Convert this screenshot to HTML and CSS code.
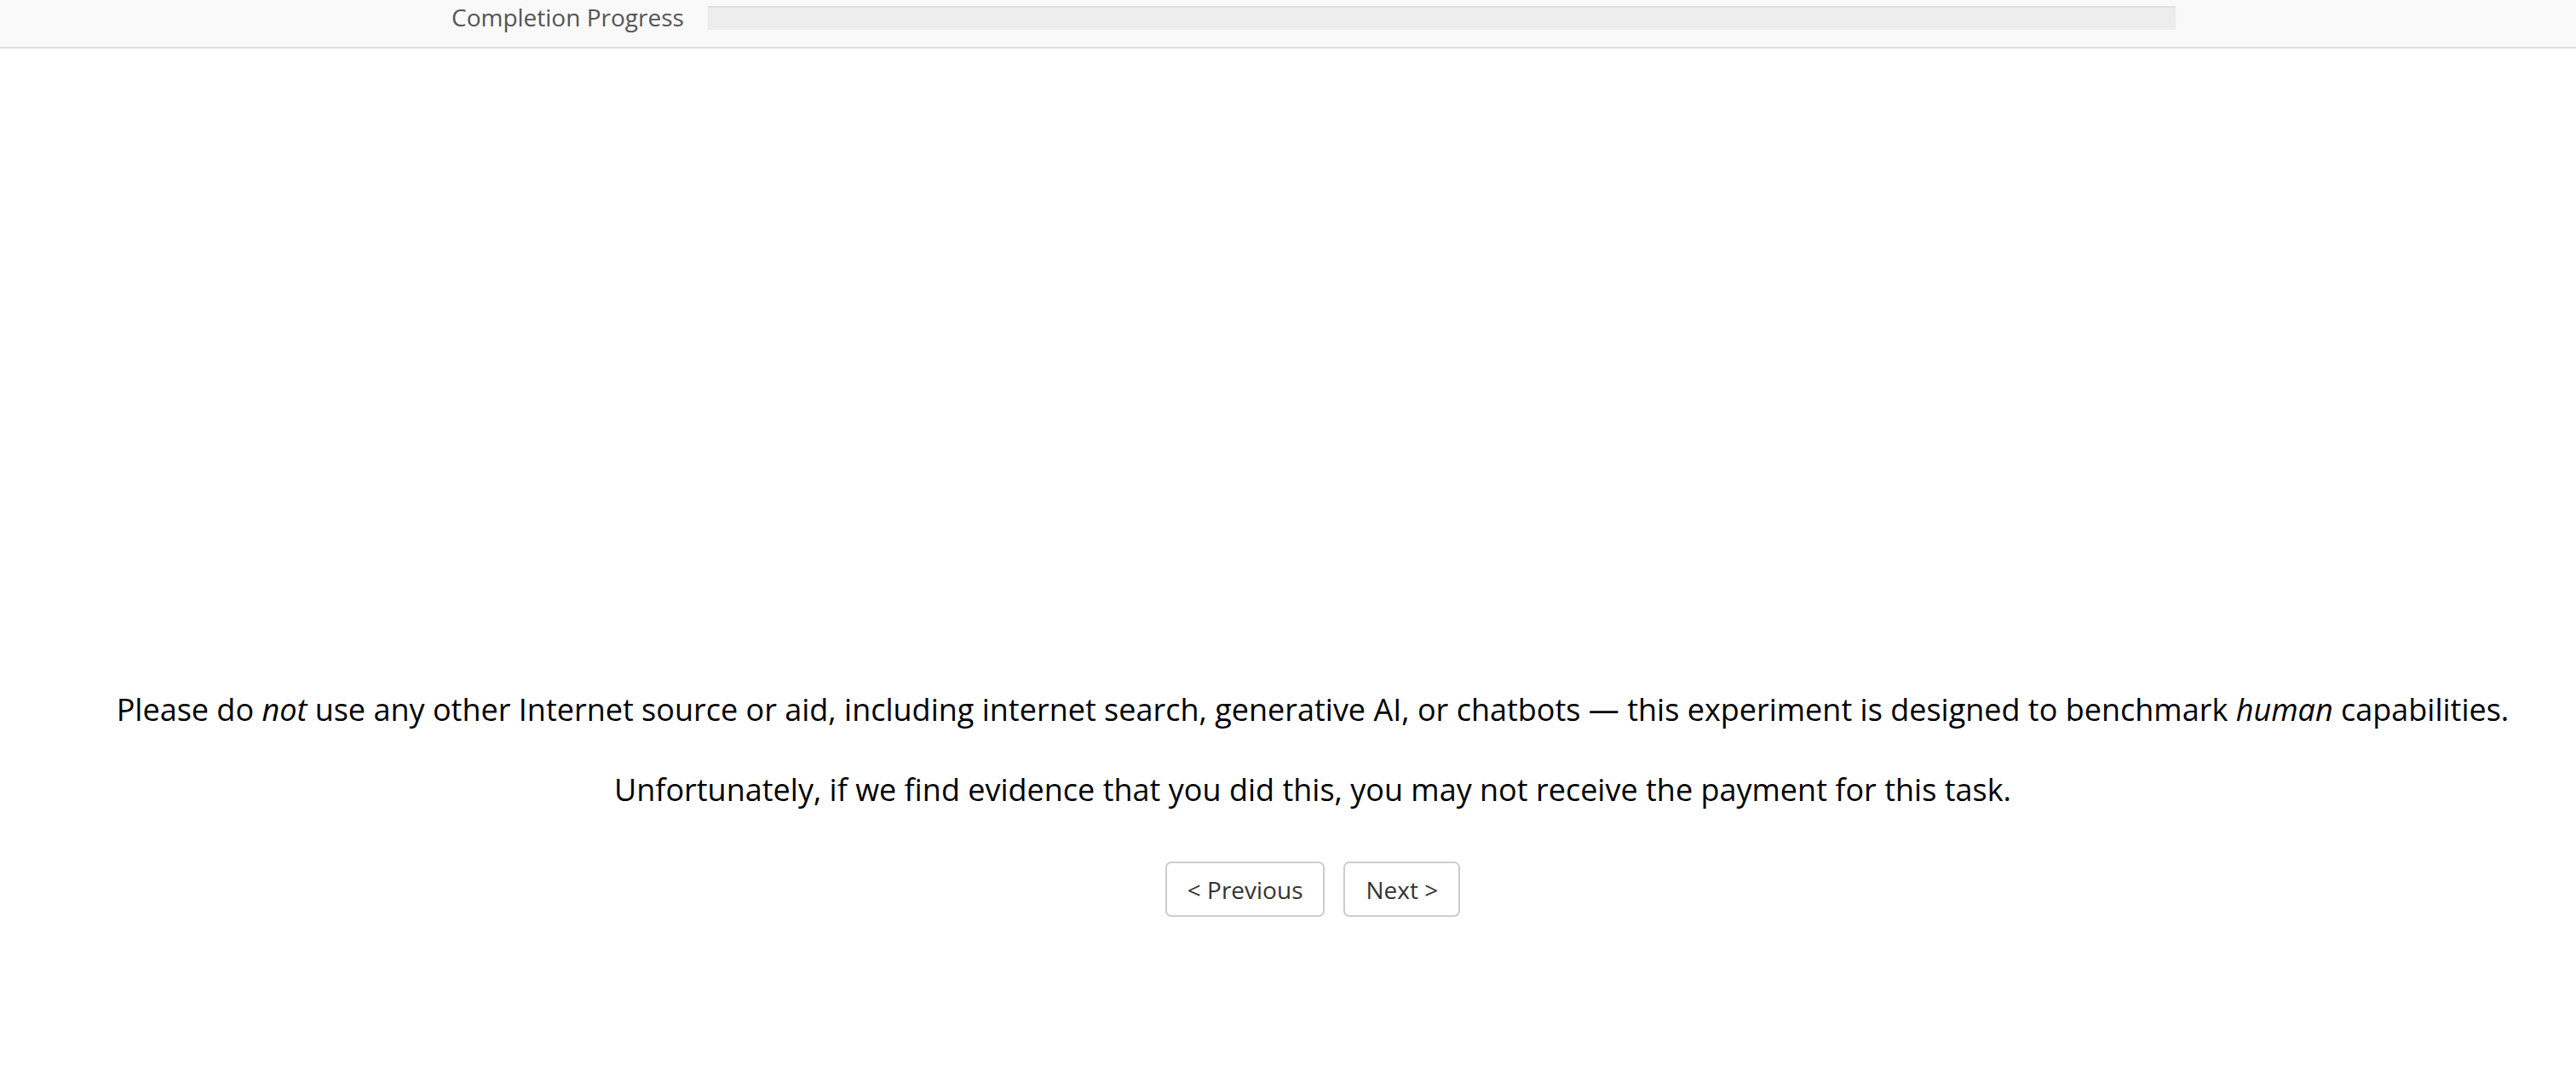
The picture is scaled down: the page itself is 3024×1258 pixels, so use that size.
FILE: index.html
```html
<!DOCTYPE html>
<html>
<head>
<meta charset="utf-8">
<link rel="stylesheet" href="styles.css">
</head>
<body>
<header class="topbar">
  <span class="progress-label">Completion Progress</span>
  <div class="progress-track"><div class="progress-fill" style="width:0%"></div></div>
</header>
<main class="content">
  <p class="notice">Please do <em>not</em> use any other Internet source or aid, including internet search, generative AI, or chatbots — this experiment is designed to benchmark <em>human</em> capabilities.</p>
  <p class="notice">Unfortunately, if we find evidence that you did this, you may not receive the payment for this task.</p>
  <div class="nav">
    <button class="btn">&lt; Previous</button>
    <button class="btn">Next &gt;</button>
  </div>
</main>
</body>
</html>
```
FILE: styles.css
```css
html, body {
  margin: 0;
  padding: 0;
  background: #ffffff;
  font-family: "Open Sans", "Noto Sans", sans-serif;
}
.topbar {
  display: flex;
  align-items: flex-start;
  height: 55px;
  background: #f9f9f9;
  border-bottom: 2px solid #dedede;
  padding-left: 530px;
  box-sizing: content-box;
}
.progress-label {
  font-size: 28px;
  line-height: 28px;
  color: #555555;
  margin-top: 6px;
  margin-right: 28px;
}
.progress-track {
  width: 1723px;
  height: 28px;
  margin-top: 7px;
  background: #ededed;
  box-shadow: inset 0 2px 2px rgba(0,0,0,0.06);
}
.progress-fill {
  height: 100%;
  background: #5cb85c;
}
.content {
  padding-left: 58px;
  padding-top: 751px;
  text-align: center;
}
.notice {
  font-size: 36px;
  line-height: 49px;
  color: #000000;
  margin: 0 0 45px 0;
}
.notice em {
  font-style: italic;
}
.nav {
  display: flex;
  justify-content: center;
  gap: 22px;
  margin-top: 60px;
}
.btn {
  font-family: "Open Sans", "Noto Sans", sans-serif;
  font-size: 28px;
  color: #333333;
  background: #ffffff;
  border: 2px solid #cccccc;
  border-radius: 7px;
  height: 65px;
  padding: 0 24px;
  line-height: 1;
}
```
